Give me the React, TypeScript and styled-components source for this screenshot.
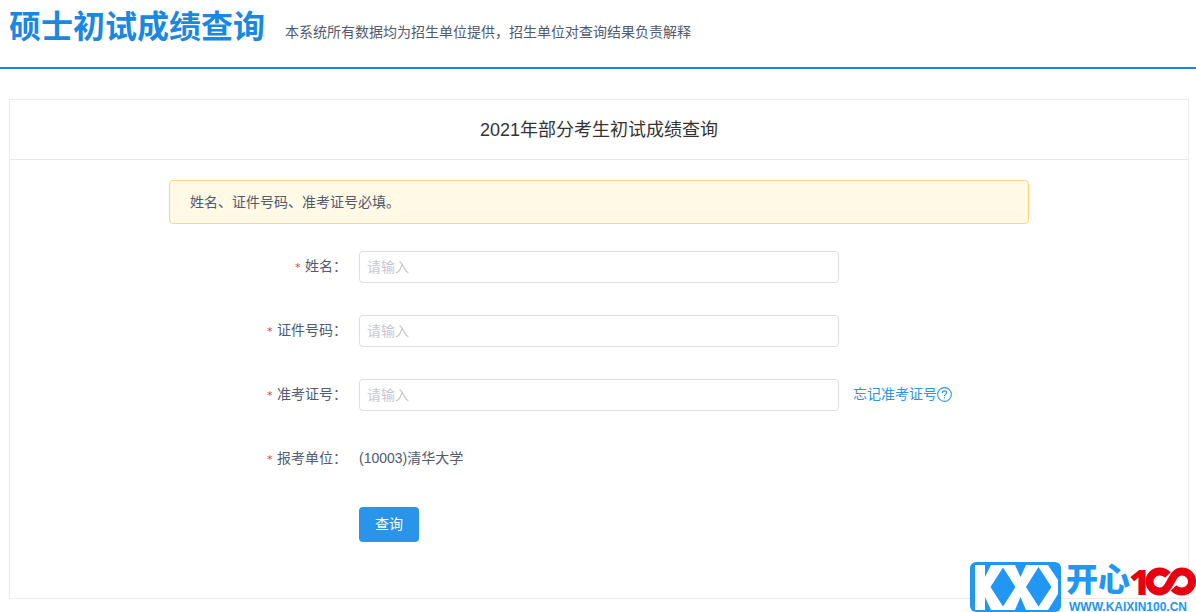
import React from 'react';
import styled, { createGlobalStyle } from 'styled-components';

const GlobalStyle = createGlobalStyle`
  *, *::before, *::after { box-sizing: border-box; }
  body {
    margin: 0;
    background: #fff;
    color: #515a6e;
    font-family: "Liberation Sans", "Noto Sans CJK SC", sans-serif;
    font-size: 14px;
    line-height: 20px;
  }
`;

const Page = styled.div`
  position: relative;
  min-height: 100vh;
`;

const Header = styled.header`
  display: flex;
  align-items: flex-start;
  flex-wrap: wrap;
  gap: 20px;
  padding: 7px 9px 20px;
  border-bottom: 2px solid #1a88e1;
`;

const SiteTitle = styled.h1`
  margin: 0;
  color: #1a88e1;
  font-size: 32px;
  font-weight: 700;
  line-height: 40px;
`;

const SiteNote = styled.p`
  margin: 0;
  padding-top: 15px;
`;

const Main = styled.main`
  padding: 30px 7px 13px 9px;
`;

const Card = styled.section`
  max-width: 1180px;
  margin: 0 auto;
  padding-bottom: 56px;
  border: 1px solid #ebebeb;
`;

const CardTitle = styled.h2`
  margin: 0;
  padding: 15px 16px 14px;
  border-bottom: 1px solid #e8e8e8;
  color: #333;
  font-size: 18px;
  font-weight: 400;
  line-height: 30px;
  text-align: center;
`;

const Body = styled.div`
  max-width: 860px;
  margin: 20px auto 0;
`;

const Alert = styled.div`
  padding: 11px 20px;
  border: 1px solid #ffd77a;
  border-radius: 4px;
  background: #fff9e6;
`;

const Form = styled.form`
  display: flex;
  flex-direction: column;
  gap: 32px;
  margin-top: 27px;
`;

const Row = styled.div`
  display: grid;
  grid-template-columns: 190px minmax(0, 480px) auto;
  justify-content: start;
  align-items: start;
  line-height: 30px;
`;

const Label = styled.label`
  padding-right: 12px;
  text-align: right;
`;

const Required = styled.span`
  margin-right: 4px;
  color: #ed4014;
  font-family: "DejaVu Sans Mono", monospace;
  font-size: 11px;
`;

const TextInput = styled.input`
  width: 100%;
  height: 32px;
  padding: 4px 7px;
  border: 1px solid #dcdee2;
  border-radius: 4px;
  background: #fff;
  color: #515a6e;
  font: inherit;
  line-height: 20px;

  &::placeholder { color: #c5c8ce; }
  &:focus { border-color: #57a3f3; outline: none; }
`;

const HelpLink = styled.a`
  display: flex;
  align-items: center;
  margin-left: 14px;
  color: #2a93ea;
  text-decoration: none;
`;

const Output = styled.output`
  display: block;
`;

const SubmitButton = styled.button`
  justify-self: start;
  grid-column: 2;
  height: 35px;
  padding: 0 16px 2px;
  border: 0;
  border-radius: 4px;
  background: #2a93ea;
  color: #fff;
  font: inherit;
  line-height: 20px;
  cursor: pointer;
`;

const Watermark = styled.svg`
  position: absolute;
  right: 0;
  bottom: 0;
  overflow: visible;
`;

type FieldProps = { id: string; label: string; children: React.ReactNode };

function Field({ id, label, children }: FieldProps) {
  return (
    <Row>
      <Label htmlFor={id}>
        <Required>*</Required>
        {label}：
      </Label>
      {children}
    </Row>
  );
}

function HelpIcon() {
  return (
    <svg width="15" height="15" viewBox="0 0 14 14" fill="none" stroke="currentColor" aria-hidden="true">
      <circle cx="7" cy="7" r="6.4" />
      <path d="M5 5.6C5 4.3 5.8 3.6 7 3.6s2 .7 2 1.8c0 1.4-2 1.5-2 3.1" />
      <path d="M7 9.6v1.1" />
    </svg>
  );
}

function SiteWatermark() {
  return (
    <Watermark width="226" height="50" viewBox="0 0 226 50" role="img" aria-label="KXX 开心100">
      <rect width="91" height="50" rx="6" fill="#2196f3" />
      <path
        fill="#fff"
        d="M5 3h10v12L21 3h24L50.500 15 56 3h22l10 15v14L78 48H56l-5.500-13L45 48H21L15 35v13H5z"
      />
      <path fill="#2196f3" d="M33 5.500L45.500 25 33 44.500 20.500 25zM68.500 5L81.500 25l-13 19.500L56 25z" />
      <text x="96" y="29" fill="#2196f3" fontFamily='"Noto Sans CJK SC", sans-serif' fontSize="32" fontWeight="900">
        开心
      </text>
      <text x="99" y="49" fill="#2196f3" fontFamily='"Liberation Sans", sans-serif' fontSize="12" fontWeight="700">
        WWW.KAIXIN100.CN
      </text>
      <text x="159" y="33" fill="#e60012" fontFamily='"Open Sans", sans-serif' fontSize="36" fontWeight="800">1</text>
      <path
        fill="none"
        stroke="#e60012"
        strokeWidth="8"
        d="M198 13C196 11 193 9.500 189.500 9.500a10 10 0 0 0 0 20C201.500 29.500 200 9.500 212 9.500a10 10 0 0 1 0 20c-4 0-6.500-1.500-8.500-3.500"
      />
    </Watermark>
  );
}

export default function App() {
  return (
    <Page>
      <GlobalStyle />
      <Header>
        <SiteTitle>硕士初试成绩查询</SiteTitle>
        <SiteNote>本系统所有数据均为招生单位提供，招生单位对查询结果负责解释</SiteNote>
      </Header>
      <Main>
        <Card>
          <CardTitle>2021年部分考生初试成绩查询</CardTitle>
          <Body>
            <Alert role="note">姓名、证件号码、准考证号必填。</Alert>
            <Form onSubmit={(event) => event.preventDefault()}>
              <Field id="name" label="姓名">
                <TextInput id="name" type="text" placeholder="请输入" />
              </Field>
              <Field id="id-number" label="证件号码">
                <TextInput id="id-number" type="text" placeholder="请输入" />
              </Field>
              <Field id="ticket" label="准考证号">
                <TextInput id="ticket" type="text" placeholder="请输入" />
                <HelpLink href="#forgot">
                  忘记准考证号
                  <HelpIcon />
                </HelpLink>
              </Field>
              <Field id="school" label="报考单位">
                <Output id="school">(10003)清华大学</Output>
              </Field>
              <Row>
                <SubmitButton type="submit">查询</SubmitButton>
              </Row>
            </Form>
          </Body>
        </Card>
      </Main>
      <SiteWatermark />
    </Page>
  );
}
